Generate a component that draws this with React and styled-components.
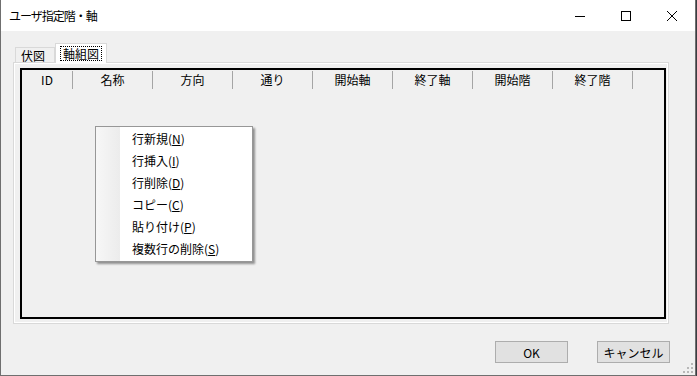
import React from "react";
import styled, { createGlobalStyle } from "styled-components";

const GlobalStyle = createGlobalStyle`
  body {
    margin: 0;
    background: #3a3d42;
    font-family: "Noto Sans CJK JP", "Noto Sans", sans-serif;
  }
`;

const columns = [
  { label: "ID", width: 50 },
  { label: "名称", width: 79 },
  { label: "方向", width: 79 },
  { label: "通り", width: 79 },
  { label: "開始軸", width: 79 },
  { label: "終了軸", width: 79 },
  { label: "開始階", width: 79 },
  { label: "終了階", width: 79 },
];

const menuItems = [
  { text: "行新規", key: "N" },
  { text: "行挿入", key: "I" },
  { text: "行削除", key: "D" },
  { text: "コピー", key: "C" },
  { text: "貼り付け", key: "P" },
  { text: "複数行の削除", key: "S" },
];

const App = () => (
  <>
    <GlobalStyle />
    <Window>
      <TitleBar>
        <Title>ユーザ指定階・軸</Title>
        <CaptionButtons>
          <CaptionButton>
            <svg width="10" height="10" viewBox="0 0 10 10">
              <path d="M0 5.5h10" stroke="#000" strokeWidth="1" />
            </svg>
          </CaptionButton>
          <CaptionButton>
            <svg width="10" height="10" viewBox="0 0 10 10">
              <rect x="0.5" y="0.5" width="9" height="9" fill="none" stroke="#000" strokeWidth="1" />
            </svg>
          </CaptionButton>
          <CaptionButton>
            <svg width="10" height="10" viewBox="0 0 10 10">
              <path d="M0 0L10 10M10 0L0 10" stroke="#000" strokeWidth="1" />
            </svg>
          </CaptionButton>
        </CaptionButtons>
      </TitleBar>

      <Body>
        <TabStrip>
          <Tab>伏図</Tab>
          <Tab $active>
            <FocusText>軸組図</FocusText>
          </Tab>
        </TabStrip>

        <Panel>
          <ListBox>
            <HeaderRow>
              {columns.map((c) => (
                <HeaderCell key={c.label} style={{ width: c.width }}>
                  {c.label}
                </HeaderCell>
              ))}
            </HeaderRow>

            <ContextMenu>
              <Gutter />
              <MenuList>
                {menuItems.map((m) => (
                  <MenuItem key={m.key}>
                    {m.text}(<u>{m.key}</u>)
                  </MenuItem>
                ))}
              </MenuList>
            </ContextMenu>
          </ListBox>
        </Panel>

        <Footer>
          <Button>OK</Button>
          <Button>キャンセル</Button>
        </Footer>
      </Body>

      <Grip width="10" height="10" viewBox="0 0 10 10">
        {[
          [8, 0],
          [8, 4],
          [4, 4],
          [8, 8],
          [4, 8],
          [0, 8],
        ].map(([x, y]) => (
          <rect key={`${x}-${y}`} x={x} y={y} width="2" height="2" fill="#b8b8b8" />
        ))}
      </Grip>
    </Window>
  </>
);

const Window = styled.div`
  position: relative;
  box-sizing: border-box;
  width: 696px;
  height: 376px;
  background: #f0f0f0;
  border: 1px solid #6f6f6f;
  border-top: none;
  display: flex;
  flex-direction: column;
  font-size: 12px;
  color: #000;
`;

const TitleBar = styled.div`
  height: 31px;
  background: #fff;
  display: flex;
  align-items: center;
  justify-content: space-between;
`;

const Title = styled.div`
  padding-left: 8px;
  font-size: 12px;
  letter-spacing: -1px;
  padding-bottom: 1px;
`;

const CaptionButtons = styled.div`
  display: flex;
  height: 100%;
`;

const CaptionButton = styled.div`
  width: 46px;
  height: 100%;
  display: flex;
  align-items: center;
  justify-content: center;
`;

const Body = styled.div`
  flex: 1;
  display: flex;
  flex-direction: column;
  padding: 12px 0 0 12px;
`;

const TabStrip = styled.div`
  height: 19px;
  display: flex;
  align-items: flex-end;
  padding-left: 2px;
`;

const Tab = styled.div`
  position: relative;
  z-index: 1;
  box-sizing: border-box;
  height: ${(p) => (p.$active ? "20px" : "15px")};
  width: ${(p) => (p.$active ? "52px" : "40px")};
  margin-bottom: ${(p) => (p.$active ? "-1px" : "0")};
  background: ${(p) => (p.$active ? "#fff" : "#f0f0f0")};
  border: 1px solid #d9d9d9;
  border-bottom: none;
  display: flex;
  align-items: ${(p) => (p.$active ? "flex-start" : "center")};
  justify-content: center;
  padding-top: ${(p) => (p.$active ? "2px" : "0")};
  padding-right: ${(p) => (p.$active ? "0" : "4px")};
  line-height: 13px;
`;

const FocusText = styled.span`
  border: 1px dotted #000;
  padding: 0 2px;
  line-height: 13px;
`;

const Panel = styled.div`
  box-sizing: border-box;
  width: 656px;
  height: 262px;
  border: 1px solid #d9d9d9;
  background: #f0f0f0;
  box-shadow: inset 0 0 0 1px #fff;
  padding: 5px 2px 4px 6px;
  display: flex;
`;

const ListBox = styled.div`
  position: relative;
  flex: 1;
  border: 2px solid #000;
  background: #f0f0f0;
`;

const HeaderRow = styled.div`
  height: 19px;
  display: flex;
`;

const HeaderCell = styled.div`
  height: 18px;
  margin-top: 1px;
  border-right: 1px solid #a5a5a5;
  display: flex;
  align-items: center;
  justify-content: center;
  flex-shrink: 0;
  line-height: 18px;
`;

const ContextMenu = styled.div`
  position: absolute;
  left: 73px;
  top: 56px;
  width: 158px;
  height: 136px;
  box-sizing: border-box;
  background: #fff;
  border: 1px solid #979797;
  box-shadow: 2px 2px 2px rgba(0, 0, 0, 0.4);
  display: flex;
`;

const Gutter = styled.div`
  width: 24px;
  background: linear-gradient(to right, #f7f7f7, #ececec);
`;

const MenuList = styled.div`
  flex: 1;
  padding: 1px 0;
`;

const MenuItem = styled.div`
  height: 22px;
  line-height: 22px;
  padding-left: 12px;
  white-space: nowrap;

  u {
    text-underline-offset: 1px;
  }
`;

const Footer = styled.div`
  display: flex;
  gap: 29px;
  margin-top: 17px;
  padding-left: 482px;
`;

const Button = styled.div`
  box-sizing: border-box;
  width: 73px;
  height: 22px;
  background: #e1e1e1;
  border: 1px solid #adadad;
  display: flex;
  align-items: center;
  justify-content: center;
`;

const Grip = styled.svg`
  position: absolute;
  right: 2px;
  bottom: 2px;
`;

export default App;
